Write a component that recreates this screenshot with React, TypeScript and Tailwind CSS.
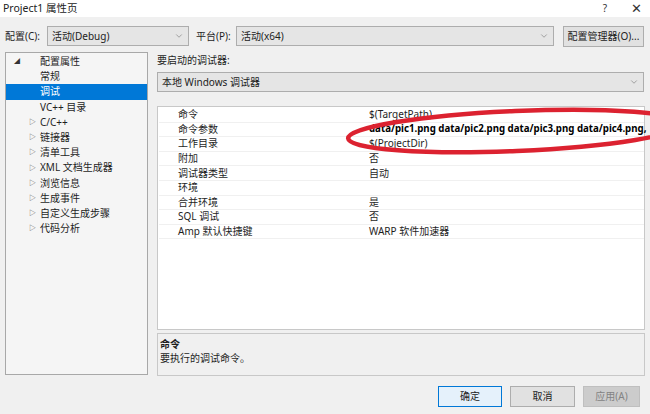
import { ChevronDown } from 'lucide-react'

const FONT = '"Noto Sans", "Noto Sans CJK SC", sans-serif'

const TREE = [
  { label: '配置属性', depth: 0, open: true },
  { label: '常规', depth: 1 },
  { label: '调试', depth: 1, selected: true },
  { label: 'VC++ 目录', depth: 1 },
  { label: 'C/C++', depth: 1, arrow: true },
  { label: '链接器', depth: 1, arrow: true },
  { label: '清单工具', depth: 1, arrow: true },
  { label: 'XML 文档生成器', depth: 1, arrow: true },
  { label: '浏览信息', depth: 1, arrow: true },
  { label: '生成事件', depth: 1, arrow: true },
  { label: '自定义生成步骤', depth: 1, arrow: true },
  { label: '代码分析', depth: 1, arrow: true },
]

const PROPS: { name: string; value: string; bold?: boolean }[] = [
  { name: '命令', value: '$(TargetPath)' },
  { name: '命令参数', value: 'data/pic1.png data/pic2.png data/pic3.png data/pic4.png,', bold: true },
  { name: '工作目录', value: '$(ProjectDir)' },
  { name: '附加', value: '否' },
  { name: '调试器类型', value: '自动' },
  { name: '环境', value: '' },
  { name: '合并环境', value: '是' },
  { name: 'SQL 调试', value: '否' },
  { name: 'Amp 默认快捷键', value: 'WARP 软件加速器' },
]

function Combo({ text, className }: { text: string; className: string }) {
  return (
    <div className={`h-[20px] bg-[#e5e5e5] border border-[#adadad] flex items-center justify-between pl-[4px] pr-[4px] ${className}`}>
      <span className="text-[#222]">{text}</span>
      <ChevronDown size={10} strokeWidth={1.5} className="text-[#777]" />
    </div>
  )
}

export default function App() {
  return (
    <div className="relative w-[650px] h-[414px] bg-[#f0f0f0] overflow-hidden text-[10px] text-[#1e1e1e]" style={{ fontFamily: FONT }}>
      {/* title bar */}
      <div className="h-[17px] bg-white flex items-center justify-between pl-[3px] pr-[8px]">
        <span className="text-[10.5px] text-[#222]">Project1 属性页</span>
        <div className="flex items-center gap-[24px] text-[#333]">
          <span className="text-[10px]">?</span>
          <span className="text-[13px] leading-none">✕</span>
        </div>
      </div>

      {/* config row */}
      <div className="flex items-center mt-[9px] pl-[5px] h-[20px]">
        <span className="w-[42px]">配置(C):</span>
        <Combo text="活动(Debug)" className="w-[142px]" />
        <span className="ml-[7px] w-[40px]">平台(P):</span>
        <Combo text="活动(x64)" className="w-[318px]" />
        <button className="ml-[9px] w-[81px] h-[21px] bg-[#e1e1e1] border border-[#adadad] text-[#222]">配置管理器(O)...</button>
      </div>

      <div className="flex mt-[6px] pl-[5px]">
        {/* tree */}
        <div className="w-[143px] h-[323px] bg-[#f5f5f5] border border-[#a8a8a8] pt-[1px]">
          {TREE.map((t) => (
            <div
              key={t.label}
              className={`h-[15.2px] flex items-center ${t.selected ? 'bg-[#0078d7] text-white' : ''}`}
            >
              {t.depth === 0 ? (
                <span className="w-[34px] pl-[8px] text-[6px] text-[#333]">◢</span>
              ) : (
                <span className="w-[34px] pl-[23px] text-[7px] text-[#555]">{t.arrow ? '▷' : ''}</span>
              )}
              <span>{t.label}</span>
            </div>
          ))}
        </div>

        {/* right panel */}
        <div className="ml-[9px] w-[488px] flex flex-col">
          <div className="h-[14px] flex items-center mt-[1px]">要启动的调试器:</div>
          <Combo text="本地 Windows 调试器" className="mt-[5px] w-[487px]" />
          <div className="mt-[14px] h-[224px] bg-white border border-[#c8c8c8] pt-[1px]">
            {PROPS.map((p) => (
              <div key={p.name} className="h-[14.6px] flex items-center border-b border-[#f0f0f0] ml-[1px]">
                <span className="w-[210px] shrink-0 pl-[19px]">{p.name}</span>
                <span className={p.bold ? 'font-bold text-[9.7px] text-black whitespace-nowrap' : ''}>{p.value}</span>
              </div>
            ))}
          </div>
          <div className="mt-[3px] h-[43px] border border-[#c8c8c8] bg-[#f0f0f0] px-[2px] pt-[3px] leading-[14px]">
            <div className="font-bold">命令</div>
            <div>要执行的调试命令。</div>
          </div>
        </div>
      </div>

      {/* buttons */}
      <div className="flex justify-end gap-[8px] mt-[10px] pr-[10px]">
        <button className="w-[64px] h-[21px] bg-[#e5f1fb] border border-[#0078d7] text-[#222]">确定</button>
        <button className="w-[65px] h-[21px] bg-[#e1e1e1] border border-[#adadad] text-[#222]">取消</button>
        <button className="w-[57px] h-[21px] bg-[#cccccc] border border-[#bfbfbf] text-[#838383]">应用(A)</button>
      </div>

      {/* red hand-drawn annotation */}
      <svg className="absolute left-0 top-0 pointer-events-none" width="650" height="414">
        <ellipse cx="516" cy="131" rx="168" ry="20" fill="none" stroke="#dc2230" strokeWidth="4.5" transform="rotate(-2.5 516 131)" />
      </svg>
    </div>
  )
}
